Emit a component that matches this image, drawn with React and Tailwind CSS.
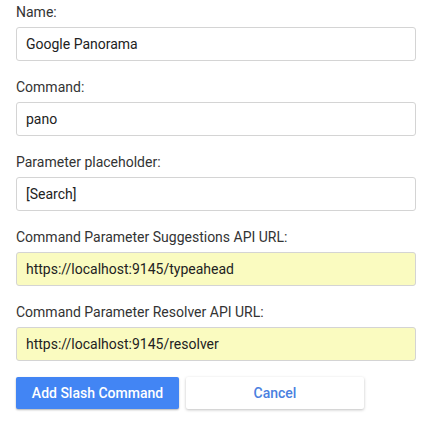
import React from 'react';

const fields = [
  { label: 'Name:', value: 'Google Panorama' },
  { label: 'Command:', value: 'pano' },
  { label: 'Parameter placeholder:', value: '[Search]' },
  { label: 'Command Parameter Suggestions API URL:', value: 'https://localhost:9145/typeahead', filled: true },
  { label: 'Command Parameter Resolver API URL:', value: 'https://localhost:9145/resolver', filled: true },
];

export default function App() {
  return (
    <div className="w-[438px] h-[431px] bg-white px-4 pt-[2px] font-['Roboto',sans-serif] text-[14px] text-[#333]">
      {fields.map((f) => (
        <div key={f.label} className="mb-4">
          <label className="block leading-5 mb-[5px]">{f.label}</label>
          <input
            readOnly
            value={f.value}
            className={`block w-[400px] h-[34px] px-[9px] rounded-[3px] border border-[#d4d4d4] text-[14px] text-[#222] outline-none ${f.filled ? 'bg-[#fafbc0]' : 'bg-white'}`}
          />
        </div>
      ))}
      <div className="flex gap-[7px] pt-0">
        <button className="w-[163px] h-[32px] rounded-[2px] bg-[#4285f4] text-white font-medium text-[14px] shadow-[0_1px_2px_rgba(0,0,0,0.3)]">
          Add Slash Command
        </button>
        <button className="w-[178px] h-[32px] rounded-[2px] bg-white text-[#4a7fe0] font-medium text-[14px] shadow-[0_1px_3px_rgba(0,0,0,0.25)]">
          Cancel
        </button>
      </div>
    </div>
  );
}
